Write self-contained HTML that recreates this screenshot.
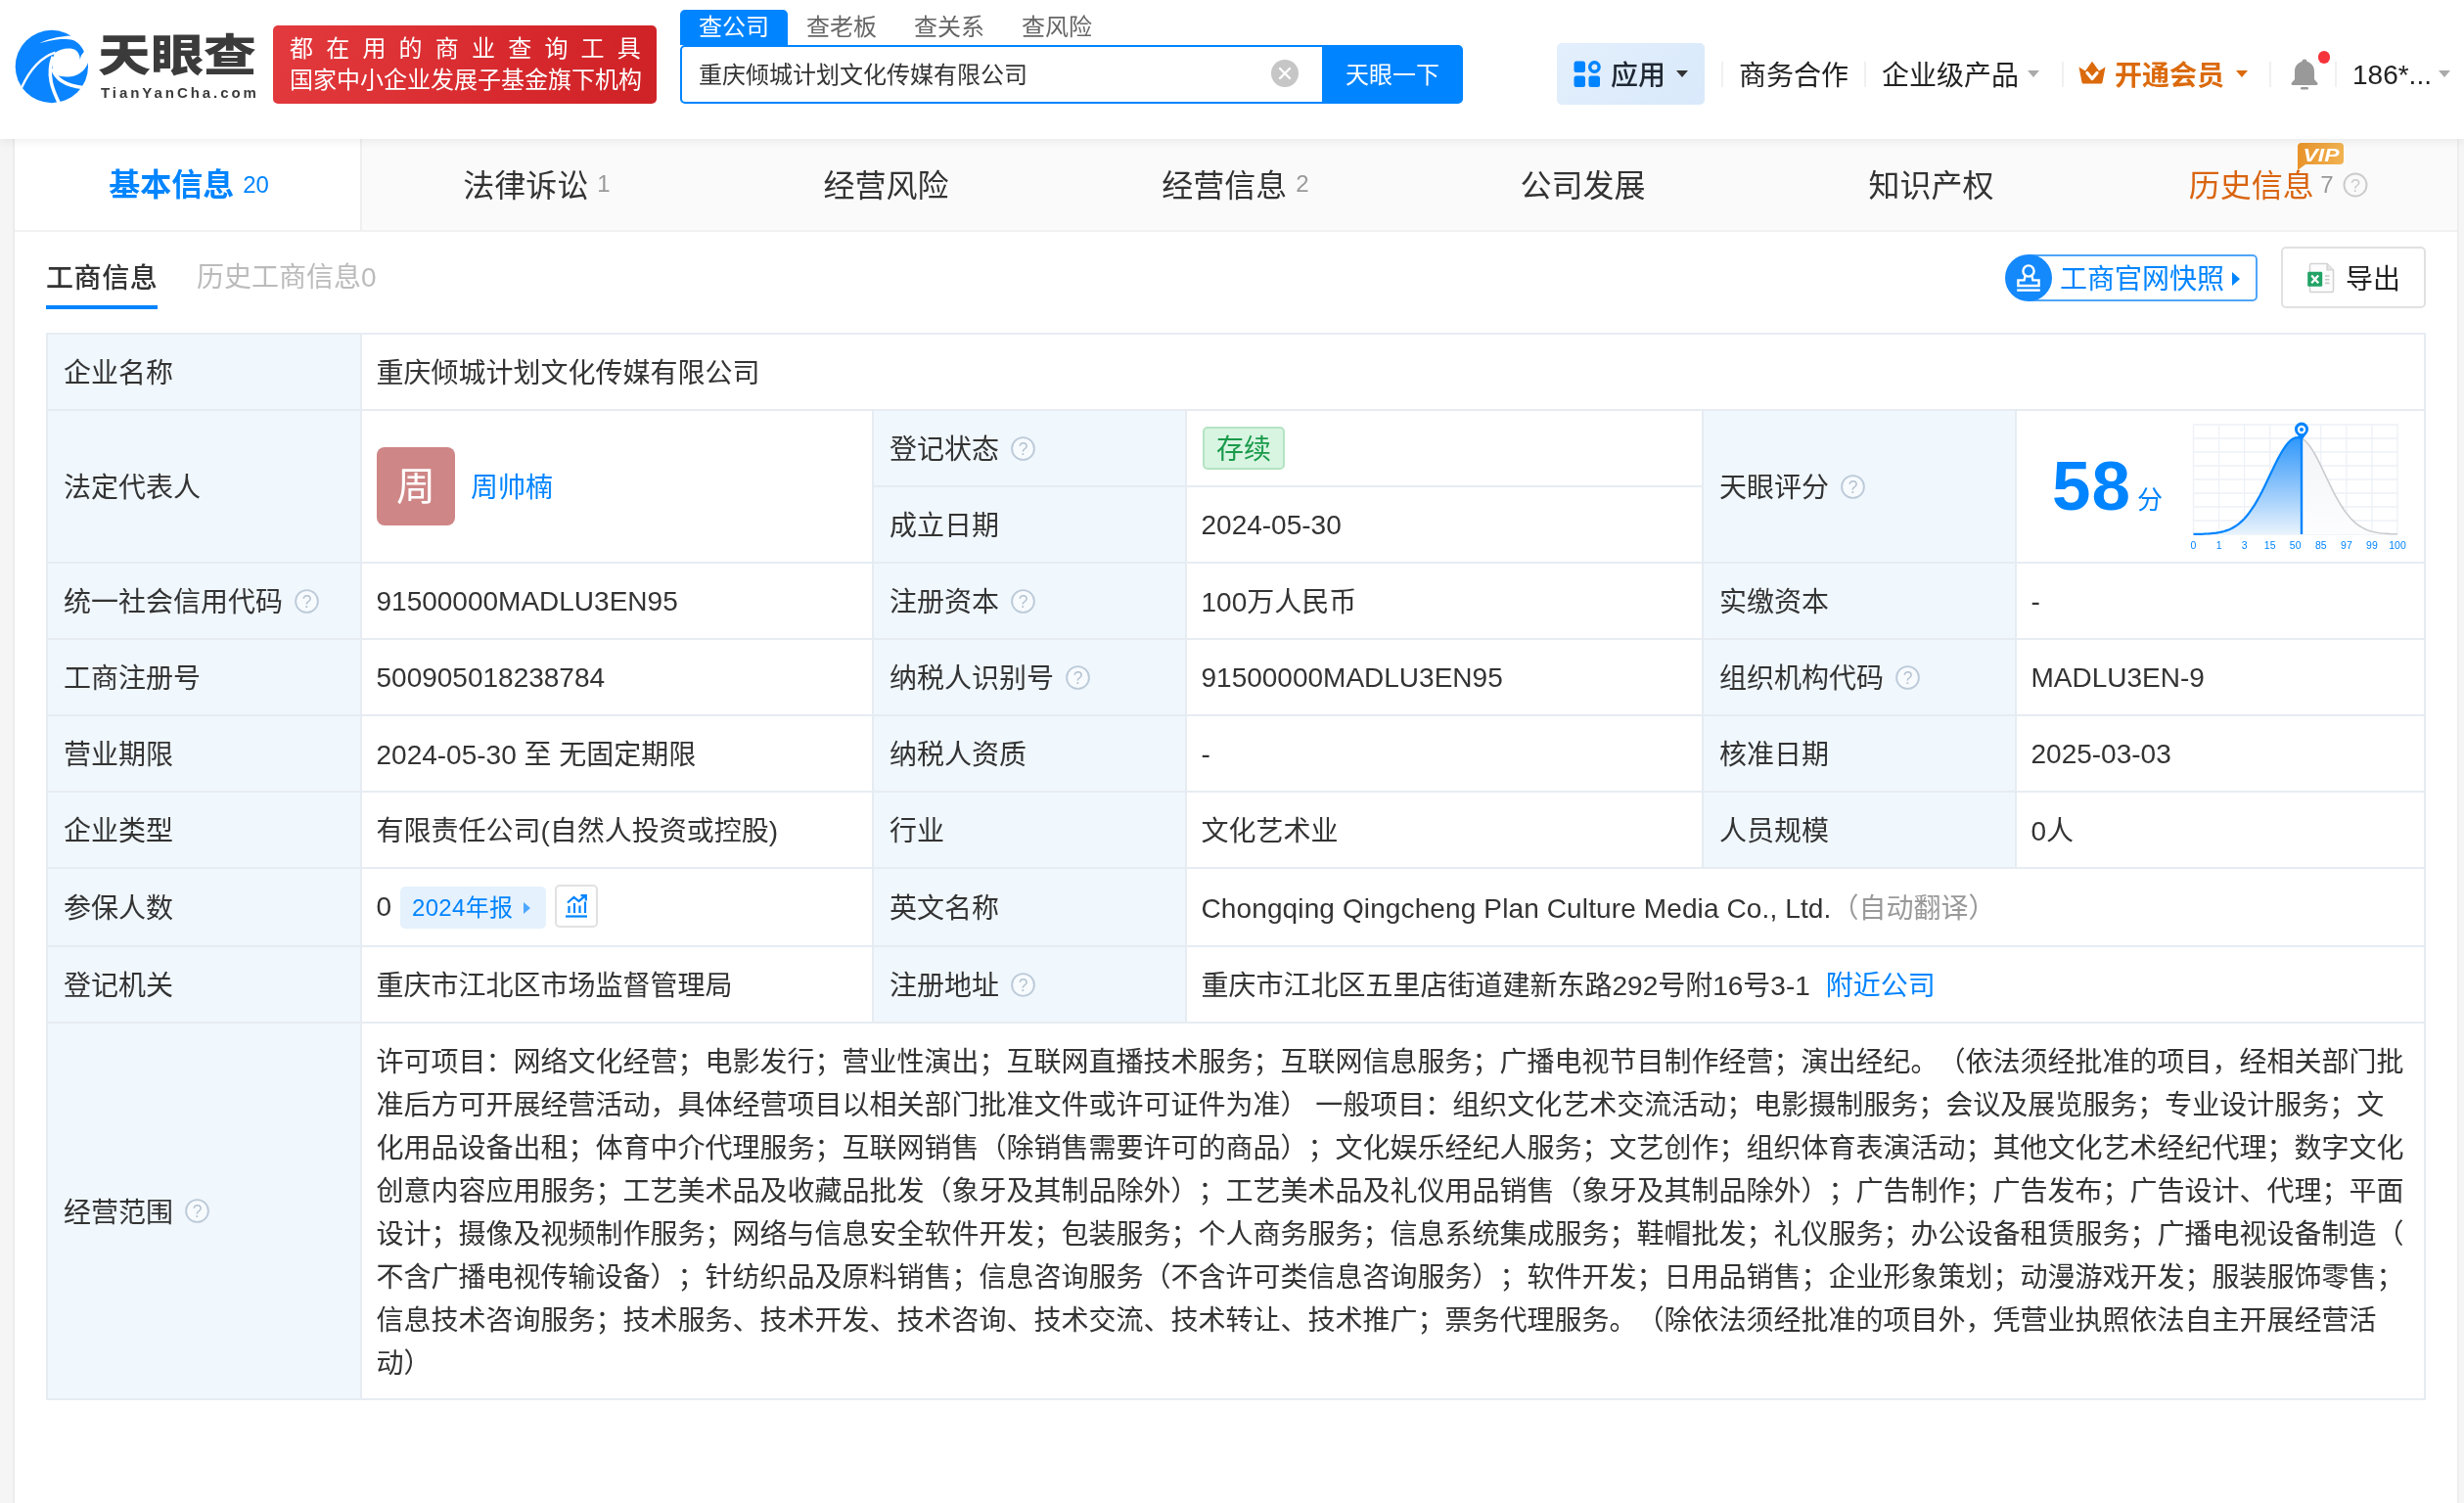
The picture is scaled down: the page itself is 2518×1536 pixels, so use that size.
<!DOCTYPE html>
<html lang="zh-CN">
<head>
<meta charset="utf-8">
<title>重庆倾城计划文化传媒有限公司 - 天眼查</title>
<style>
*{box-sizing:border-box;margin:0;padding:0}
html,body{width:2518px;height:1536px;overflow:hidden}
body{will-change:transform;text-spacing-trim:space-all;background:#f5f5f5;font-family:"Liberation Sans","Noto Sans CJK SC",sans-serif;color:#333;position:relative;font-size:28px}
.abs{position:absolute}
.nw{white-space:nowrap}
/* header */
#hd{position:absolute;left:0;top:0;width:2518px;height:142px;background:#fff;box-shadow:0 2px 10px rgba(0,0,0,.07);z-index:5}
#logo-cn{position:absolute;left:100px;top:28px;font-size:45px;font-weight:900;color:#3b3b3b;line-height:60px;white-space:nowrap;transform:scaleX(1.2);transform-origin:0 0}
#logo-en{position:absolute;left:103px;top:85px;font-size:15px;font-weight:700;color:#3b3b3b;letter-spacing:2.95px;line-height:20px;white-space:nowrap}
#banner{position:absolute;left:279px;top:26px;width:392px;height:80px;border-radius:5px;background:linear-gradient(100deg,#e23a3e 0%,#d82a2e 60%,#cf2226 100%);color:#fff;font-size:24px;white-space:nowrap}
#banner .l1{position:absolute;left:17px;top:7px;line-height:34px;letter-spacing:13.2px}
#banner .l2{position:absolute;left:17px;top:39px;line-height:34px}
.stab{position:absolute;top:10px;width:110px;height:36px;line-height:35px;text-align:center;font-size:24px;color:#666;white-space:nowrap}
.stab.on{background:#0084ff;color:#fff;border-radius:5px 5px 0 0}
#sbox{position:absolute;left:695px;top:46px;width:658px;height:60px;border:2px solid #0084ff;border-radius:5px 0 0 5px;background:#fff}
#sbox .t{position:absolute;left:17px;top:0;line-height:58px;font-size:24px;color:#333;white-space:nowrap}
#sbtn{position:absolute;left:1351px;top:46px;width:144px;height:60px;background:#0084ff;color:#fff;font-size:24px;line-height:61px;text-align:center;border-radius:0 5px 5px 0;white-space:nowrap}
#app{position:absolute;left:1591px;top:44px;width:151px;height:63px;border-radius:5px;background:linear-gradient(135deg,#e3effc,#d9e9fb)}
.hn{position:absolute;top:58px;line-height:40px;font-size:28px;color:#222;white-space:nowrap}
.vdiv{position:absolute;top:63px;width:2px;height:26px;background:#f0f0f0}
.caret{position:absolute;width:0;height:0;border-left:6.5px solid transparent;border-right:6.5px solid transparent;border-top:7px solid #aaa;top:72px}
/* nav */
#nav{position:absolute;left:15px;top:142px;width:2496px;height:95px;background:#fafafa;border-bottom:2px solid #f1f1f1;box-shadow:-2px 0 0 #ececec,1.5px 0 0 #ececec}
.ntab{position:absolute;top:0;height:93px;padding-bottom:3px;display:flex;align-items:center;justify-content:center;font-size:32px;color:#333;white-space:nowrap}
.ntab .c{font-size:24px;color:#999;margin-left:9px;position:relative;top:1px}
.ntab.on{padding-bottom:5px;background:#fff;color:#0084ff;font-weight:700;border-right:2px solid #efefef;height:93px}
.ntab.on .c{color:#0084ff;font-weight:400;top:2.5px}
#main{position:absolute;left:15px;top:237px;width:2496px;height:1299px;background:#fff;box-shadow:-2px 0 0 #ececec,1.5px 0 0 #ececec}
/* table */
.cell{position:absolute;border-left:2px solid #e6ecf2;border-top:2px solid #e6ecf2;display:flex;align-items:center;padding-left:14.5px;padding-top:4px;white-space:nowrap;font-size:28px;line-height:44px;color:#333}
.cell.lb{background:#f0f7fd;padding-left:16px}
.q{display:inline-block;width:25px;height:25px;margin-left:12px;flex:none;position:relative;top:-2px}
a{color:#0084ff;text-decoration:none}
.ava{position:relative;top:-2px;margin-left:.5px;width:80px;height:80px;border-radius:8px;background:#cf8686;color:#fff;font-size:40px;line-height:80px;text-align:center;flex:none}
.tag-g{position:relative;top:-2px;margin-left:1.5px;display:inline-block;height:44px;line-height:44px;padding:0 12px;border:2px solid #b4e3c4;background:#d8f5e2;color:#1a9b4b;border-radius:5px}
.tag-b{position:relative;top:-1.5px;display:inline-flex;align-items:center;height:43px;line-height:43px;padding:0 15.5px 0 12px;margin-left:9px;background:#e5f1fc;color:#0084ff;font-size:24px;letter-spacing:.3px;border-radius:5px}
.tag-b i{display:inline-block;width:0;height:0;border-top:6.5px solid transparent;border-bottom:6.5px solid transparent;border-left:7.5px solid #4da7ff;margin-left:11px}
.ibtn{position:relative;top:-3.5px;display:inline-flex;align-items:center;justify-content:center;width:44px;height:44px;border:2px solid #e1e1e1;border-radius:5px;margin-left:9px;background:#fff}
.lt{position:relative;top:-1px}
.scope{white-space:nowrap;line-height:44px}
</style>
</head>
<body>
<div id="hd">
  <svg class="abs" style="left:5px;top:20px" width="100" height="95" viewBox="0 0 1582 1503">
    <circle cx="757" cy="760" r="588" fill="#0a84ff"/>
    <g fill="#fff">
    <path d="M800,545 C900,470 1060,440 1150,500 C1195,535 1212,590 1215,648 Q1225,575 1280,520 L1470,430 L1470,706 L1342,700 C1300,840 1150,935 1000,925 C930,920 880,910 850,900 C790,850 750,760 770,680 C775,630 785,585 800,545Z"/>
    <path d="M555,385 C700,318 860,272 1075,262 L1300,230 L1420,520 L1280,522 C1250,440 1180,360 1100,332 C1050,316 950,312 900,318 C780,330 650,355 555,385Z"/>
    </g>
    <g fill="none" stroke="#fff" stroke-linecap="butt">
    <path d="M270,1100 Q480,640 815,532" stroke-width="38"/>
    <path d="M875,1350 C770,1130 670,900 778,600" stroke-width="56"/>
    <path d="M772,790 Q840,1050 1260,1098" stroke-width="56"/>
    </g>
  </svg>
  <div id="logo-cn">天眼查</div>
  <div id="logo-en">TianYanCha.com</div>
  <div id="banner"><div class="l1">都在用的商业查询工具</div><div class="l2">国家中小企业发展子基金旗下机构</div></div>
  <div class="stab on" style="left:695px">查公司</div>
  <div class="stab" style="left:805px">查老板</div>
  <div class="stab" style="left:915px">查关系</div>
  <div class="stab" style="left:1025px">查风险</div>
  <div id="sbox"><div class="t">重庆倾城计划文化传媒有限公司</div>
    <svg class="abs" style="left:602px;top:13px" width="28" height="28" viewBox="0 0 28 28"><circle cx="14" cy="14" r="14" fill="#c6c6c6"/><path d="M9 9L19 19M19 9L9 19" stroke="#fff" stroke-width="2.4" stroke-linecap="round"/></svg>
  </div>
  <div id="sbtn">天眼一下</div>
  <div id="app">
    <svg class="abs" style="left:17px;top:18px" width="28" height="28" viewBox="0 0 28 28"><rect x="0.5" y="0.5" width="11.5" height="11.5" rx="2.5" fill="#0084ff"/><rect x="0.5" y="15.5" width="11.5" height="11.5" rx="2.5" fill="#0084ff"/><rect x="15.5" y="15.5" width="11.5" height="11.5" rx="2.5" fill="#0084ff"/><circle cx="21.4" cy="6.5" r="4.7" fill="none" stroke="#0084ff" stroke-width="3.4"/></svg>
    <div class="abs nw" style="left:55px;top:13.5px;line-height:40px;font-size:28px;font-weight:500;color:#1f2733">应用</div>
    <div class="caret" style="left:122px;top:28px;border-top-color:#333"></div>
  </div>
  <div class="vdiv" style="left:1759px"></div>
  <div class="hn" style="left:1777px">商务合作</div>
  <div class="vdiv" style="left:1905px"></div>
  <div class="hn" style="left:1923px">企业级产品</div>
  <div class="caret" style="left:2072px"></div>
  <div class="vdiv" style="left:2107px"></div>
  <svg class="abs" style="left:2124px;top:62px" width="28" height="24" viewBox="0 0 28 24"><path d="M0.5 6.5 L7 10.5 L14 0.8 L21 10.5 L27.5 6.5 L24.5 22 Q24.3 23.5 22.8 23.5 L5.2 23.5 Q3.7 23.5 3.5 22Z" fill="#db6a0c"/><path d="M9 12.5 L14 18.5 L19 12.5" fill="none" stroke="#fff" stroke-width="3.3" stroke-linecap="round" stroke-linejoin="round"/></svg>
  <div class="hn" style="left:2161px;color:#db6a0c;font-weight:700">开通会员</div>
  <div class="caret" style="left:2285px;border-top-color:#db6a0c"></div>
  <div class="vdiv" style="left:2319px"></div>
  <svg class="abs" style="left:2340px;top:59px" width="30" height="34" viewBox="0 0 30 34"><path d="M15 1.5 C16.6 1.5 17.6 2.6 17.6 4 C22.5 5.2 25 9.2 25 14 L25 22 L28.5 26 Q29 28 27 28 L3 28 Q1 28 1.5 26 L5 22 L5 14 C5 9.2 7.5 5.2 12.4 4 C12.4 2.6 13.4 1.5 15 1.5Z" fill="#999"/><rect x="11" y="30" width="8" height="2.6" rx="1.3" fill="#999"/></svg>
  <div class="abs" style="left:2368.5px;top:52px;width:12.5px;height:12.5px;border-radius:50%;background:#f5333a"></div>
  <div class="vdiv" style="left:2386px"></div>
  <div class="hn" style="left:2404px;top:57px">186*...</div>
  <div class="caret" style="left:2492px"></div>
</div>
<div id="nav">
  <div class="ntab on" style="left:0;width:355px;padding-left:3px">基本信息<span class="c">20</span></div>
  <div class="ntab" style="left:355px;width:357px">法律诉讼<span class="c">1</span></div>
  <div class="ntab" style="left:712px;width:357px">经营风险</div>
  <div class="ntab" style="left:1069px;width:357px">经营信息<span class="c">2</span></div>
  <div class="ntab" style="left:1424px;width:357px">公司发展</div>
  <div class="ntab" style="left:1780px;width:357px">知识产权</div>
  <div class="ntab" style="left:2140px;width:356px;color:#d9640f;padding-right:9px">历史信息<span class="c" style="margin-left:6.5px;top:2px">7</span>
    <svg style="margin-left:9.5px;flex:none;position:relative;top:1.5px" width="26" height="26" viewBox="0 0 26 26"><circle cx="13" cy="13" r="11.5" fill="none" stroke="#ccc" stroke-width="2"/><text x="13" y="19.5" font-size="18" fill="#ccc" text-anchor="middle" font-family="Liberation Sans, sans-serif">?</text></svg>
    <svg class="abs" style="left:192px;top:3px" width="50" height="30" viewBox="0 0 50 30"><defs><linearGradient id="vg" x1="0" y1="0" x2="1" y2="0"><stop offset="0" stop-color="#e8932a"/><stop offset="1" stop-color="#f1b352"/></linearGradient></defs><path d="M5 1 H44 Q48 1 48 5 V19 Q48 23 44 23 H9 L1 29 V5 Q1 1 5 1Z" fill="url(#vg)"/><text x="6.5" y="19.5" font-size="19" font-weight="700" font-style="italic" fill="#fff" textLength="37" lengthAdjust="spacingAndGlyphs" font-family="Liberation Sans, sans-serif">VIP</text></svg>
  </div>
</div>
<!--MAIN-->
<div id="main"></div>
<div class="abs nw" style="left:47px;top:263px;font-size:28px;font-weight:500;letter-spacing:.6px;color:#333;line-height:44px">工商信息</div>
<div class="abs" style="left:47px;top:312px;width:114px;height:4px;background:#0084ff"></div>
<div class="abs nw" style="left:201px;top:262px;font-size:28px;color:#bbb;line-height:44px">历史工商信息0</div>
<div class="abs" style="left:2073px;top:260px;width:234px;height:48px;border:2px solid #4fa5f8;border-radius:0 5px 5px 0;border-left:none"></div>
<div class="abs" style="left:2049px;top:260px;width:48px;height:48px;border-radius:50%;background:#1489fb"><svg class="abs" style="left:11px;top:9px" width="26" height="30" viewBox="0 0 26 30" fill="none" stroke="#fff" stroke-width="2.4"><circle cx="13" cy="8" r="5.6"/><path d="M9.6 12.6 L8.6 17.4 H2.4 V23 H23.6 V17.4 H17.4 L16.4 12.6"/><path d="M1.2 27.6H24.8"/></svg></div>
<div class="abs nw" style="left:2105px;top:264px;font-size:28px;color:#0084ff;line-height:44px">工商官网快照</div>
<div class="abs" style="left:2281px;top:277.5px;width:0;height:0;border-top:7.5px solid transparent;border-bottom:7.5px solid transparent;border-left:8px solid #0084ff"></div>
<div class="abs" style="left:2331px;top:252px;width:148px;height:63px;border:2px solid #e1e1e1;border-radius:5px;background:#fff"></div>
<svg class="abs" style="left:2357px;top:268px" width="30" height="32" viewBox="0 0 30 32"><path d="M5 1.5 H21 L27.5 8 V29 Q27.5 30.5 26 30.5 H5 Q3.5 30.5 3.5 29 V3 Q3.5 1.5 5 1.5Z" fill="#fcfcfc" stroke="#d2d2d2" stroke-width="1.5"/><path d="M21 1.5 V8 H27.5" fill="#e4e4e4" stroke="#cfcfcf" stroke-width="1.2"/><path d="M19 14H23.5M19 17.7H23.5M19 21.4H23.5" stroke="#c8c8c8" stroke-width="1.6"/><rect x="1.2" y="9.7" width="15" height="15" rx="1.2" fill="#21a366"/><path d="M5.2 13.4 L12.2 21.2 M12.2 13.4 L5.2 21.2" stroke="#fff" stroke-width="2.3"/></svg>
<div class="abs nw" style="left:2397px;top:264px;font-size:28px;color:#222;line-height:44px">导出</div>
<div class="cell lb" style="left:47px;top:340px;width:321px;height:78px;">企业名称</div>
<div class="cell" style="left:368px;top:340px;width:2109px;height:78px;">重庆倾城计划文化传媒有限公司</div>
<div class="cell lb" style="left:47px;top:418px;width:321px;height:156px;">法定代表人</div>
<div class="cell" style="left:368px;top:418px;width:523px;height:156px;"><div class="ava">周</div><a style="margin-left:16px">周帅楠</a></div>
<div class="cell lb" style="left:891px;top:418px;width:320px;height:78px;">登记状态<svg class="q" viewBox="0 0 25 25"><circle cx="12.5" cy="12.5" r="11.4" fill="rgba(255,255,255,.45)" stroke="#bccad9" stroke-width="1.9"/><text x="12.5" y="18.9" font-size="17.5" fill="#b4c1cf" text-anchor="middle" font-family="Liberation Sans, sans-serif">?</text></svg></div>
<div class="cell" style="left:1211px;top:418px;width:528px;height:78px;"><span class="tag-g">存续</span></div>
<div class="cell lb" style="left:891px;top:496px;width:320px;height:78px;">成立日期</div>
<div class="cell" style="left:1211px;top:496px;width:528px;height:78px;"><span class="lt">2024-05-30</span></div>
<div class="cell lb" style="left:1739px;top:418px;width:320px;height:156px;">天眼评分<svg class="q" viewBox="0 0 25 25"><circle cx="12.5" cy="12.5" r="11.4" fill="rgba(255,255,255,.45)" stroke="#bccad9" stroke-width="1.9"/><text x="12.5" y="18.9" font-size="17.5" fill="#b4c1cf" text-anchor="middle" font-family="Liberation Sans, sans-serif">?</text></svg></div>
<div class="cell" style="left:2059px;top:418px;width:418px;height:156px;"><div class="abs nw" style="left:36px;top:37px;font-size:71px;font-weight:700;letter-spacing:1px;color:#0084ff;line-height:80px">58</div><div class="abs nw" style="left:123px;top:73px;font-size:26px;color:#0084ff;line-height:36px">分</div>
<svg class="abs" style="left:169px;top:6px" width="236" height="144" viewBox="0 0 236 144">
<defs><linearGradient id="bg1" x1="0" y1="0" x2="0" y2="1"><stop offset="0" stop-color="#2f97fb"/><stop offset="0.5" stop-color="#8cc4fb"/><stop offset="1" stop-color="#e9f3fd"/></linearGradient>
<linearGradient id="bg2" x1="0" y1="0" x2="0" y2="1"><stop offset="0" stop-color="#f2f4f7"/><stop offset="1" stop-color="#fdfdfe"/></linearGradient></defs>
<g stroke="#edf1f6" stroke-width="1.3"><path d="M11.5 8V120"/><path d="M37.6 8V120"/><path d="M63.6 8V120"/><path d="M89.7 8V120"/><path d="M115.7 8V120"/><path d="M141.8 8V120"/><path d="M167.9 8V120"/><path d="M193.9 8V120"/><path d="M220.0 8V120"/><path d="M11.5 8.0H220"/><path d="M11.5 22.0H220"/><path d="M11.5 36.0H220"/><path d="M11.5 50.0H220"/><path d="M11.5 64.0H220"/><path d="M11.5 78.0H220"/><path d="M11.5 92.0H220"/><path d="M11.5 106.0H220"/><path d="M11.5 120.0H220"/></g>
<path d="M11.5,119.9 L14.1,119.9 L16.7,119.8 L19.3,119.8 L21.9,119.7 L24.5,119.5 L27.1,119.4 L29.7,119.2 L32.3,118.9 L35.0,118.6 L37.6,118.2 L40.2,117.6 L42.8,117.0 L45.4,116.1 L48.0,115.2 L50.6,114.0 L53.2,112.5 L55.8,110.8 L58.4,108.9 L61.0,106.6 L63.6,104.0 L66.2,101.0 L68.8,97.6 L71.4,93.9 L74.1,89.9 L76.7,85.4 L79.3,80.7 L81.9,75.7 L84.5,70.4 L87.1,65.0 L89.7,59.6 L92.3,54.1 L94.9,48.7 L97.5,43.6 L100.1,38.7 L102.7,34.3 L105.3,30.3 L107.9,27.0 L110.5,24.3 L113.1,22.4 L115.8,21.3 L118.4,21.0 L121.0,21.5 L122.0,22.0 L122,120 L11.5,120Z" fill="url(#bg1)"/>
<path d="M122.0,22.0 L123.6,22.9 L126.2,25.0 L128.8,27.8 L131.4,31.3 L134.0,35.4 L136.6,40.0 L139.2,44.9 L141.8,50.2 L144.4,55.6 L147.0,61.1 L149.6,66.5 L152.2,71.9 L154.8,77.1 L157.4,82.0 L160.1,86.7 L162.7,91.0 L165.3,95.0 L167.9,98.6 L170.5,101.8 L173.1,104.7 L175.7,107.2 L178.3,109.4 L180.9,111.3 L183.5,112.9 L186.1,114.3 L188.7,115.4 L191.3,116.4 L193.9,117.2 L196.5,117.8 L199.2,118.3 L201.8,118.7 L204.4,119.0 L207.0,119.2 L209.6,119.4 L212.2,119.6 L214.8,119.7 L217.4,119.8 L220.0,119.8 L122,120Z" fill="url(#bg2)"/>
<path d="M122.0,22.0 L123.6,22.9 L126.2,25.0 L128.8,27.8 L131.4,31.3 L134.0,35.4 L136.6,40.0 L139.2,44.9 L141.8,50.2 L144.4,55.6 L147.0,61.1 L149.6,66.5 L152.2,71.9 L154.8,77.1 L157.4,82.0 L160.1,86.7 L162.7,91.0 L165.3,95.0 L167.9,98.6 L170.5,101.8 L173.1,104.7 L175.7,107.2 L178.3,109.4 L180.9,111.3 L183.5,112.9 L186.1,114.3 L188.7,115.4 L191.3,116.4 L193.9,117.2 L196.5,117.8 L199.2,118.3 L201.8,118.7 L204.4,119.0 L207.0,119.2 L209.6,119.4 L212.2,119.6 L214.8,119.7 L217.4,119.8 L220.0,119.8" fill="none" stroke="#c9cccf" stroke-width="1.6"/>
<path d="M11.5,119.9 L14.1,119.9 L16.7,119.8 L19.3,119.8 L21.9,119.7 L24.5,119.5 L27.1,119.4 L29.7,119.2 L32.3,118.9 L35.0,118.6 L37.6,118.2 L40.2,117.6 L42.8,117.0 L45.4,116.1 L48.0,115.2 L50.6,114.0 L53.2,112.5 L55.8,110.8 L58.4,108.9 L61.0,106.6 L63.6,104.0 L66.2,101.0 L68.8,97.6 L71.4,93.9 L74.1,89.9 L76.7,85.4 L79.3,80.7 L81.9,75.7 L84.5,70.4 L87.1,65.0 L89.7,59.6 L92.3,54.1 L94.9,48.7 L97.5,43.6 L100.1,38.7 L102.7,34.3 L105.3,30.3 L107.9,27.0 L110.5,24.3 L113.1,22.4 L115.8,21.3 L118.4,21.0 L121.0,21.5 L122.0,22.0" fill="none" stroke="#0084ff" stroke-width="2.2"/>
<path d="M122 22V120" stroke="#0084ff" stroke-width="2.4"/>
<path d="M122 24 L116.6 17 A7 7 0 1 1 127.4 17Z" fill="#0084ff"/><circle cx="122" cy="13" r="4.2" fill="#fff"/><circle cx="122" cy="13" r="2" fill="#0084ff"/>
<g font-size="10.5" fill="#0084ff" text-anchor="middle" font-family="Liberation Sans, sans-serif"><text x="11.5" y="135">0</text><text x="37.6" y="135">1</text><text x="63.6" y="135">3</text><text x="89.7" y="135">15</text><text x="115.7" y="135">50</text><text x="141.8" y="135">85</text><text x="167.9" y="135">97</text><text x="193.9" y="135">99</text><text x="220.0" y="135">100</text></g>
</svg></div>
<div class="cell lb" style="left:47px;top:574px;width:321px;height:78px;">统一社会信用代码<svg class="q" viewBox="0 0 25 25"><circle cx="12.5" cy="12.5" r="11.4" fill="rgba(255,255,255,.45)" stroke="#bccad9" stroke-width="1.9"/><text x="12.5" y="18.9" font-size="17.5" fill="#b4c1cf" text-anchor="middle" font-family="Liberation Sans, sans-serif">?</text></svg></div>
<div class="cell" style="left:368px;top:574px;width:523px;height:78px;"><span class="lt">91500000MADLU3EN95</span></div>
<div class="cell lb" style="left:891px;top:574px;width:320px;height:78px;">注册资本<svg class="q" viewBox="0 0 25 25"><circle cx="12.5" cy="12.5" r="11.4" fill="rgba(255,255,255,.45)" stroke="#bccad9" stroke-width="1.9"/><text x="12.5" y="18.9" font-size="17.5" fill="#b4c1cf" text-anchor="middle" font-family="Liberation Sans, sans-serif">?</text></svg></div>
<div class="cell" style="left:1211px;top:574px;width:528px;height:78px;">100万人民币</div>
<div class="cell lb" style="left:1739px;top:574px;width:320px;height:78px;">实缴资本</div>
<div class="cell" style="left:2059px;top:574px;width:418px;height:78px;"><span class="lt">-</span></div>
<div class="cell lb" style="left:47px;top:652px;width:321px;height:78px;">工商注册号</div>
<div class="cell" style="left:368px;top:652px;width:523px;height:78px;"><span class="lt">500905018238784</span></div>
<div class="cell lb" style="left:891px;top:652px;width:320px;height:78px;">纳税人识别号<svg class="q" viewBox="0 0 25 25"><circle cx="12.5" cy="12.5" r="11.4" fill="rgba(255,255,255,.45)" stroke="#bccad9" stroke-width="1.9"/><text x="12.5" y="18.9" font-size="17.5" fill="#b4c1cf" text-anchor="middle" font-family="Liberation Sans, sans-serif">?</text></svg></div>
<div class="cell" style="left:1211px;top:652px;width:528px;height:78px;"><span class="lt">91500000MADLU3EN95</span></div>
<div class="cell lb" style="left:1739px;top:652px;width:320px;height:78px;">组织机构代码<svg class="q" viewBox="0 0 25 25"><circle cx="12.5" cy="12.5" r="11.4" fill="rgba(255,255,255,.45)" stroke="#bccad9" stroke-width="1.9"/><text x="12.5" y="18.9" font-size="17.5" fill="#b4c1cf" text-anchor="middle" font-family="Liberation Sans, sans-serif">?</text></svg></div>
<div class="cell" style="left:2059px;top:652px;width:418px;height:78px;"><span class="lt">MADLU3EN-9</span></div>
<div class="cell lb" style="left:47px;top:730px;width:321px;height:78px;">营业期限</div>
<div class="cell" style="left:368px;top:730px;width:523px;height:78px;">2024-05-30 至 无固定期限</div>
<div class="cell lb" style="left:891px;top:730px;width:320px;height:78px;">纳税人资质</div>
<div class="cell" style="left:1211px;top:730px;width:528px;height:78px;"><span class="lt">-</span></div>
<div class="cell lb" style="left:1739px;top:730px;width:320px;height:78px;">核准日期</div>
<div class="cell" style="left:2059px;top:730px;width:418px;height:78px;"><span class="lt">2025-03-03</span></div>
<div class="cell lb" style="left:47px;top:808px;width:321px;height:78px;">企业类型</div>
<div class="cell" style="left:368px;top:808px;width:523px;height:78px;">有限责任公司(自然人投资或控股)</div>
<div class="cell lb" style="left:891px;top:808px;width:320px;height:78px;">行业</div>
<div class="cell" style="left:1211px;top:808px;width:528px;height:78px;">文化艺术业</div>
<div class="cell lb" style="left:1739px;top:808px;width:320px;height:78px;">人员规模</div>
<div class="cell" style="left:2059px;top:808px;width:418px;height:78px;">0人</div>
<div class="cell lb" style="left:47px;top:886px;width:321px;height:80px;">参保人数</div>
<div class="cell" style="left:368px;top:886px;width:523px;height:80px;"><span class="lt" style="top:-2px">0</span><span class="tag-b">2024年报<i></i></span><span class="ibtn"><svg width="24" height="24" viewBox="0 0 24 24" fill="none" stroke="#0084ff" stroke-width="2.2"><path d="M1 22.5H23" /><path d="M4.5 19V12M10 19V9M15.5 19V11.5M21 19V7.5"/><path d="M3 8.5L9.5 3L14.5 7L21.5 1.2M16.5 1.2H21.8V6.5"/></svg></span></div>
<div class="cell lb" style="left:891px;top:886px;width:320px;height:80px;">英文名称</div>
<div class="cell" style="left:1211px;top:886px;width:1266px;height:80px;"><span style="letter-spacing:.12px">Chongqing Qingcheng Plan Culture Media Co., Ltd.</span><span style="color:#999">（自动翻译）</span></div>
<div class="cell lb" style="left:47px;top:966px;width:321px;height:78px;">登记机关</div>
<div class="cell" style="left:368px;top:966px;width:523px;height:78px;">重庆市江北区市场监督管理局</div>
<div class="cell lb" style="left:891px;top:966px;width:320px;height:78px;">注册地址<svg class="q" viewBox="0 0 25 25"><circle cx="12.5" cy="12.5" r="11.4" fill="rgba(255,255,255,.45)" stroke="#bccad9" stroke-width="1.9"/><text x="12.5" y="18.9" font-size="17.5" fill="#b4c1cf" text-anchor="middle" font-family="Liberation Sans, sans-serif">?</text></svg></div>
<div class="cell" style="left:1211px;top:966px;width:1266px;height:78px;">重庆市江北区五里店街道建新东路292号附16号3-1<a style="margin-left:16px">附近公司</a></div>
<div class="cell lb" style="left:47px;top:1044px;width:321px;height:385px;">经营范围<svg class="q" viewBox="0 0 25 25"><circle cx="12.5" cy="12.5" r="11.4" fill="rgba(255,255,255,.45)" stroke="#bccad9" stroke-width="1.9"/><text x="12.5" y="18.9" font-size="17.5" fill="#b4c1cf" text-anchor="middle" font-family="Liberation Sans, sans-serif">?</text></svg></div>
<div class="cell" style="left:368px;top:1044px;width:2109px;height:385px;"><div class="scope">许可项目：网络文化经营；电影发行；营业性演出；互联网直播技术服务；互联网信息服务；广播电视节目制作经营；演出经纪。（依法须经批准的项目，经相关部门批<br>准后方可开展经营活动，具体经营项目以相关部门批准文件或许可证件为准） 一般项目：组织文化艺术交流活动；电影摄制服务；会议及展览服务；专业设计服务；文<br>化用品设备出租；体育中介代理服务；互联网销售（除销售需要许可的商品）；文化娱乐经纪人服务；文艺创作；组织体育表演活动；其他文化艺术经纪代理；数字文化<br>创意内容应用服务；工艺美术品及收藏品批发（象牙及其制品除外）；工艺美术品及礼仪用品销售（象牙及其制品除外）；广告制作；广告发布；广告设计、代理；平面<br>设计；摄像及视频制作服务；网络与信息安全软件开发；包装服务；个人商务服务；信息系统集成服务；鞋帽批发；礼仪服务；办公设备租赁服务；广播电视设备制造（<br>不含广播电视传输设备）；针纺织品及原料销售；信息咨询服务（不含许可类信息咨询服务）；软件开发；日用品销售；企业形象策划；动漫游戏开发；服装服饰零售；<br>信息技术咨询服务；技术服务、技术开发、技术咨询、技术交流、技术转让、技术推广；票务代理服务。（除依法须经批准的项目外，凭营业执照依法自主开展经营活<br>动）</div></div>
<div class="abs" style="left:2477px;top:340px;width:2px;height:1091px;background:#e6ecf2"></div>
<div class="abs" style="left:47px;top:1429px;width:2432px;height:2px;background:#e6ecf2"></div>
<!--/MAIN-->
</body>
</html>
